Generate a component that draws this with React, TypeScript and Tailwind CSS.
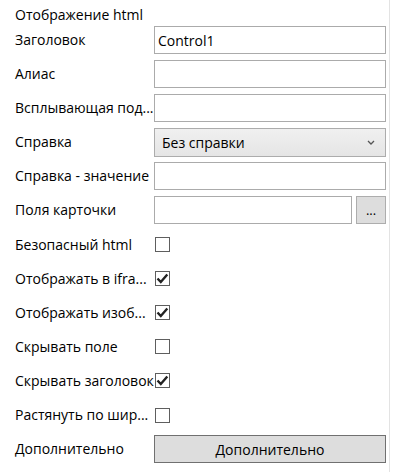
import React from "react";

const font = { fontFamily: '"Open Sans", "Noto Sans", sans-serif' };

function Label({ children }: { children: React.ReactNode }) {
  return (
    <div className="w-[154px] shrink-0 pl-[15px] whitespace-nowrap text-[14px] leading-[20px] text-black">
      {children}
    </div>
  );
}

function Input({ value }: { value?: string }) {
  return (
    <div className="flex-1 h-[28px] border border-[#ababab] bg-white flex items-center px-[3px] text-[14px] text-black">
      {value}
    </div>
  );
}

function Check({ checked }: { checked?: boolean }) {
  return (
    <div className="w-[15px] h-[15px] border border-[#5e5e5e] bg-white flex items-center justify-center ml-[1px]">
      {checked && (
        <svg width="13" height="13" viewBox="0 0 13 13">
          <path d="M1.5 6.5 L4.8 10 L11.3 2.5" fill="none" stroke="#222" strokeWidth="2.4" strokeLinejoin="miter" />
        </svg>
      )}
    </div>
  );
}

function Row({ children }: { children: React.ReactNode }) {
  return <div className="flex items-center h-[28px] pr-[3px]">{children}</div>;
}

export default function App() {
  return (
    <div className="w-[393px] h-[472px] bg-white flex" style={font}>
      <div className="flex-1 flex flex-col pt-[3px]">
        <div className="h-[23px] flex items-center pl-[15px] text-[14px] text-black">Отображение html</div>
        <div className="flex flex-col gap-[6.1px]">
          <Row>
            <Label>Заголовок</Label>
            <Input value="Control1" />
          </Row>
          <Row>
            <Label>Алиас</Label>
            <Input />
          </Row>
          <Row>
            <Label>Всплывающая под...</Label>
            <Input />
          </Row>
          <Row>
            <Label>Справка</Label>
            <div className="flex-1 h-[29px] border border-[#acacac] bg-gradient-to-b from-[#f0f0f0] to-[#e5e5e5] flex items-center justify-between pl-[7px] pr-[10px] text-[14px] text-black">
              <span>Без справки</span>
              <svg width="8" height="5" viewBox="0 0 8 5">
                <path d="M1 1 L4 4 L7 1" fill="none" stroke="#555" strokeWidth="1.3" />
              </svg>
            </div>
          </Row>
          <Row>
            <Label>Справка - значение</Label>
            <Input />
          </Row>
          <Row>
            <Label>Поля карточки</Label>
            <div className="flex-1 flex gap-[4px]">
              <Input />
              <div className="w-[30px] h-[28px] border border-[#adadad] bg-[#dddddd] flex items-end justify-center pb-[6px] text-[13px] leading-[13px] text-black">
                ...
              </div>
            </div>
          </Row>
          <Row>
            <Label>Безопасный html</Label>
            <Check />
          </Row>
          <Row>
            <Label>Отображать в ifra...</Label>
            <Check checked />
          </Row>
          <Row>
            <Label>Отображать изоб...</Label>
            <Check checked />
          </Row>
          <Row>
            <Label>Скрывать поле</Label>
            <Check />
          </Row>
          <Row>
            <Label>Скрывать заголовок</Label>
            <Check checked />
          </Row>
          <Row>
            <Label>Растянуть по шир...</Label>
            <Check />
          </Row>
          <Row>
            <Label>Дополнительно</Label>
            <div className="flex-1 h-[28px] border border-[#707070] bg-[#dddddd] flex items-center justify-center text-[14px] text-black">
              Дополнительно
            </div>
          </Row>
        </div>
      </div>
      <div className="w-[1px] bg-[#e3e3e3] mr-[3px]" />
    </div>
  );
}
